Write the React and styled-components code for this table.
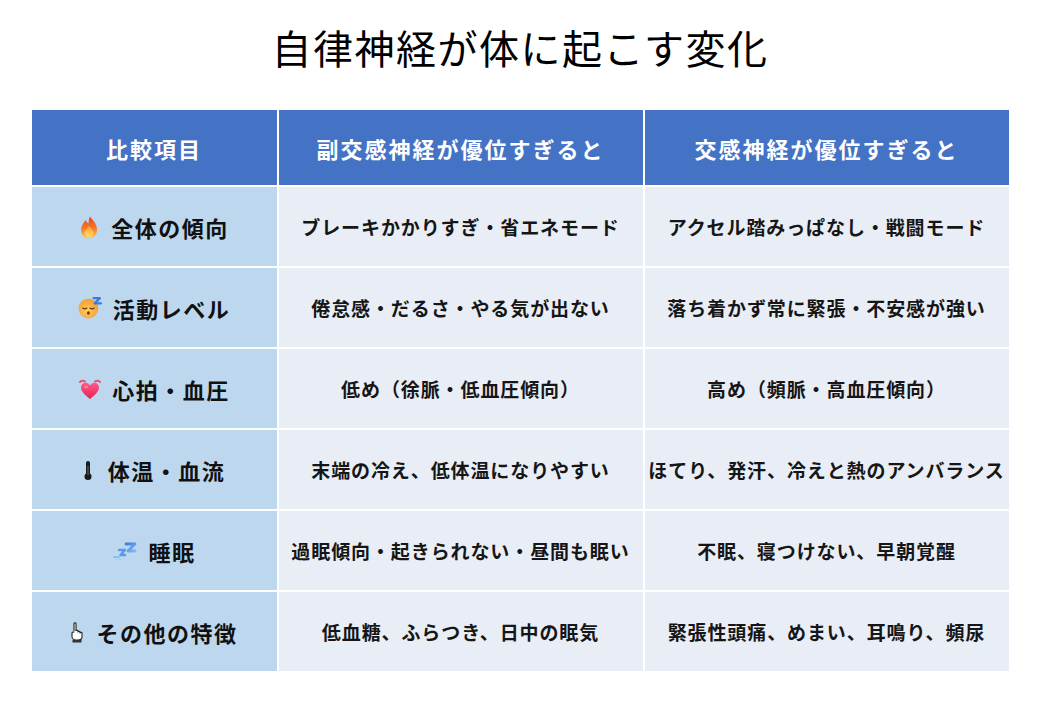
import React from "react";
import styled, { createGlobalStyle } from "styled-components";

const Global = createGlobalStyle`
  html, body { margin: 0; padding: 0; background: #ffffff; }
  body { font-family: "Noto Sans CJK JP", "Noto Sans", sans-serif; color: #111; }
`;

const Page = styled.div`
  width: 1040px;
  height: 720px;
  display: flex;
  flex-direction: column;
  align-items: center;
`;

const Title = styled.h1`
  margin: 0;
  height: 110px;
  display: flex;
  align-items: center;
  justify-content: center;
  font-size: 40px;
  font-weight: 400;
  letter-spacing: 1.5px;
  color: #000;
  padding-bottom: 16px;
  box-sizing: border-box;
`;

const Table = styled.div`
  display: grid;
  grid-template-columns: 245px 364px 364px;
  grid-template-rows: 75px repeat(6, 79px);
  gap: 2px;
  background: #ffffff;
`;

const HeadCell = styled.div`
  background: #4472c4;
  color: #ffffff;
  font-weight: 700;
  font-size: 22px;
  letter-spacing: 2px;
  display: flex;
  align-items: center;
  justify-content: center;
`;

const LabelCell = styled.div`
  background: #bdd7ee;
  font-weight: 700;
  font-size: 22px;
  letter-spacing: 1.5px;
  display: flex;
  align-items: center;
  justify-content: center;
  gap: ${(p) => p.$gap}px;
  color: #111;
`;

const Cell = styled.div`
  background: #e9eef6;
  font-weight: 700;
  font-size: 19px;
  letter-spacing: 0.9px;
  display: flex;
  align-items: center;
  justify-content: center;
  white-space: nowrap;
  color: #161616;
`;

const Icon = styled.svg`
  flex: none;
  display: block;
`;

const Fire = () => (
  <Icon width="20" height="24" viewBox="0 0 20 24">
    <defs>
      <linearGradient id="fireG" x1="0" y1="0" x2="0" y2="1">
        <stop offset="0" stopColor="#e8421c" />
        <stop offset="0.55" stopColor="#f77a2a" />
        <stop offset="1" stopColor="#ffc23a" />
      </linearGradient>
      <linearGradient id="fireIn" x1="0" y1="0" x2="0" y2="1">
        <stop offset="0" stopColor="#ff9a3a" />
        <stop offset="1" stopColor="#ffe066" />
      </linearGradient>
    </defs>
    <path d="M11 1.5 C13 5 18 8 18 15 C18 19.5 14.5 23 10 23 C5.5 23 2 19.5 2 15 C2 10.5 5 8 6.5 5 C7.5 7 8.5 8 9.5 8.5 C9.5 6 10 3.5 11 1.5 Z" fill="url(#fireG)" />
    <path d="M10 11 C11.5 13.5 14.5 15 14.5 18 C14.5 20.5 12.5 22.3 10 22.3 C7.5 22.3 5.5 20.5 5.5 18 C5.5 15.5 8 14 10 11 Z" fill="url(#fireIn)" />
  </Icon>
);

const Sleepy = () => (
  <Icon width="25" height="23" viewBox="0 0 24 22">
    <defs>
      <radialGradient id="faceG" cx="0.45" cy="0.6" r="0.6">
        <stop offset="0" stopColor="#ffd15a" />
        <stop offset="1" stopColor="#f59a32" />
      </radialGradient>
    </defs>
    <circle cx="10" cy="12" r="9.5" fill="url(#faceG)" />
    <path d="M4.5 11.5 Q6.5 13 8.5 11.5" stroke="#5b3515" strokeWidth="1.1" fill="none" strokeLinecap="round" />
    <path d="M11.5 11.5 Q13.5 13 15.5 11.5" stroke="#5b3515" strokeWidth="1.1" fill="none" strokeLinecap="round" />
    <ellipse cx="10" cy="16.3" rx="1.4" ry="1.6" fill="#8a2a1a" />
    <path d="M15 2 L21 2 L16 7 L22 7" stroke="#3a7fd6" strokeWidth="2.2" fill="none" strokeLinejoin="round" strokeLinecap="round" />
  </Icon>
);

const Heart = () => (
  <Icon width="24" height="22" viewBox="0 0 24 22">
    <defs>
      <linearGradient id="heartG" x1="0" y1="0" x2="0" y2="1">
        <stop offset="0" stopColor="#ff5a8a" />
        <stop offset="1" stopColor="#e2244f" />
      </linearGradient>
    </defs>
    <path d="M2 4 Q4 2 7 3.5" stroke="#e8537a" strokeWidth="2" fill="none" strokeLinecap="round" />
    <path d="M22 4 Q20 2 17 3.5" stroke="#e8537a" strokeWidth="2" fill="none" strokeLinecap="round" />
    <path d="M12 21 C7 17 3 13.5 3 9.5 C3 6.5 5.2 4.8 7.5 4.8 C9.5 4.8 11 6 12 7.5 C13 6 14.5 4.8 16.5 4.8 C18.8 4.8 21 6.5 21 9.5 C21 13.5 17 17 12 21 Z" fill="url(#heartG)" />
    <ellipse cx="8" cy="9" rx="2" ry="1.4" fill="#ff9ab6" opacity="0.6" />
  </Icon>
);

const Thermo = () => (
  <Icon width="10" height="22" viewBox="0 0 10 22">
    <rect x="3" y="2" width="4" height="14" rx="2" fill="#1a1a1a" />
    <circle cx="5" cy="17.5" r="3.5" fill="#1a1a1a" />
    <rect x="4.3" y="7" width="1.4" height="9" fill="#555" />
  </Icon>
);

const Zzz = () => (
  <Icon width="26" height="20" viewBox="0 0 26 20">
    <defs>
      <linearGradient id="zG" x1="0" y1="0" x2="1" y2="1">
        <stop offset="0" stopColor="#3d7ee0" />
        <stop offset="1" stopColor="#7fb8f5" />
      </linearGradient>
    </defs>
    <path d="M14 3 L23 3 L16 10 L23 10" stroke="url(#zG)" strokeWidth="2.8" fill="none" strokeLinejoin="round" strokeLinecap="round" />
    <path d="M7 9 L13 9 L8.5 14 L13 14" stroke="#5a9ae8" strokeWidth="2.4" fill="none" strokeLinejoin="round" strokeLinecap="round" />
    <path d="M2 16 L7 16" stroke="#8ec0f2" strokeWidth="2" strokeLinecap="round" />
    <path d="M4 18.5 L9 18.5" stroke="#a9d0f6" strokeWidth="1.6" strokeLinecap="round" />
  </Icon>
);

const PointUp = () => (
  <Icon width="14" height="22" viewBox="0 0 14 22">
    <path d="M4 10 L4 2.5 C4 1.5 6 1.5 6 2.5 L6 10 M6 10 C6 9 8 9 8 10 L8 11 C8 10 10 10 10 11 L10 12 C10 11 12 11 12 12 L12 16 C12 18 10 19 8 19 L6 19 C4 19 2 17.5 2 15.5 L2 12 C2 11 4 10.5 4 11.5"
      stroke="#222" strokeWidth="1.1" fill="#fff" strokeLinejoin="round" />
    <rect x="2.5" y="19" width="9" height="2.5" fill="#333" />
  </Icon>
);

const rows = [
  { icon: <Fire />, gap: 12, label: "全体の傾向", a: "ブレーキかかりすぎ・省エネモード", b: "アクセル踏みっぱなし・戦闘モード" },
  { icon: <Sleepy />, gap: 10, label: "活動レベル", a: "倦怠感・だるさ・やる気が出ない", b: "落ち着かず常に緊張・不安感が強い" },
  { icon: <Heart />, gap: 10, label: "心拍・血圧", a: "低め（徐脈・低血圧傾向）", b: "高め（頻脈・高血圧傾向）" },
  { icon: <Thermo />, gap: 15, label: "体温・血流", a: "末端の冷え、低体温になりやすい", b: "ほてり、発汗、冷えと熱のアンバランス" },
  { icon: <Zzz />, gap: 10, label: "睡眠", a: "過眠傾向・起きられない・昼間も眠い", b: "不眠、寝つけない、早朝覚醒" },
  { icon: <PointUp />, gap: 12, label: "その他の特徴", a: "低血糖、ふらつき、日中の眠気", b: "緊張性頭痛、めまい、耳鳴り、頻尿" },
];

export default function App() {
  return (
    <Page>
      <Global />
      <Title>自律神経が体に起こす変化</Title>
      <Table>
        <HeadCell>比較項目</HeadCell>
        <HeadCell>副交感神経が優位すぎると</HeadCell>
        <HeadCell>交感神経が優位すぎると</HeadCell>
        {rows.map((r) => (
          <React.Fragment key={r.label}>
            <LabelCell $gap={r.gap}>
              {r.icon}
              <span>{r.label}</span>
            </LabelCell>
            <Cell>{r.a}</Cell>
            <Cell>{r.b}</Cell>
          </React.Fragment>
        ))}
      </Table>
    </Page>
  );
}
